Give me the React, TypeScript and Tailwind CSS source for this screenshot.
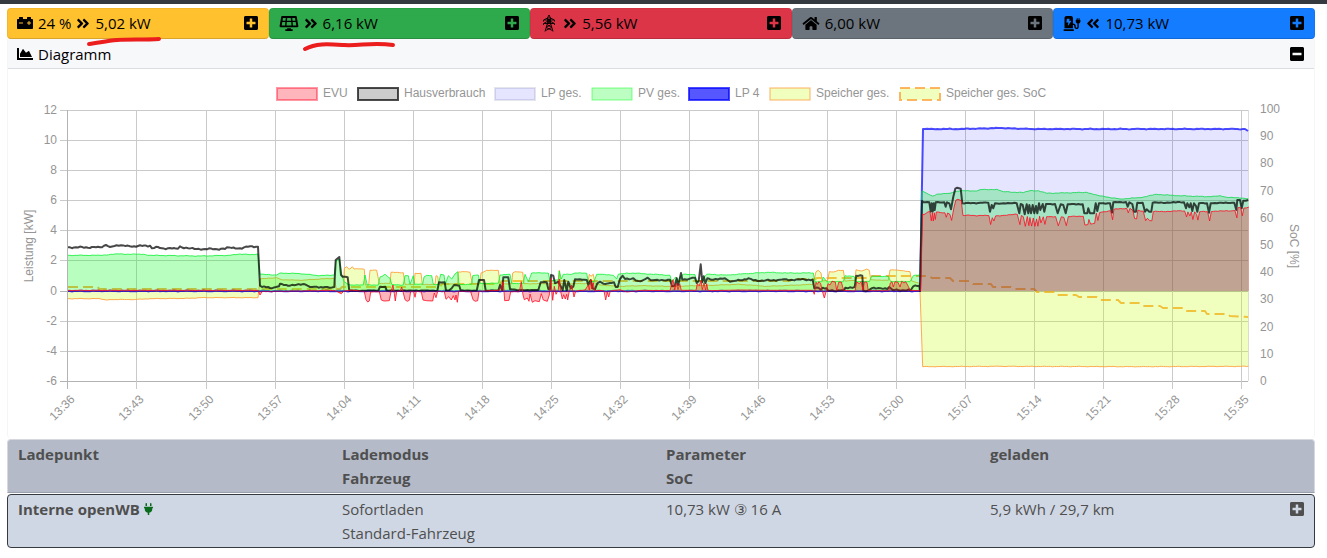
import React from "react";
import {
  FaAngleDoubleLeft,
  FaAngleDoubleRight,
  FaCarBattery,
  FaChargingStation,
  FaChartArea,
  FaHome,
  FaMinusSquare,
  FaPlug,
  FaPlusSquare,
  FaSolarPanel,
} from "react-icons/fa";

type Point = [number, number];

interface TileProps {
  label: string;
  color: string;
  icon: React.ReactNode;
  level?: string;
  direction?: "in" | "out";
  power: string;
  mark?: React.ReactNode;
}

interface LegendItem {
  x: number;
  label: string;
  fill: string;
  stroke: string;
  width: number;
  dash?: string;
}

const ZERO = 291;
const LEFT = 68;
const RIGHT = 1248;

// a block of samples: x from the block's start, height above zero, three ticks per unit
const block = (start: number, raw: string): Point[] => {
  const n = raw.trim().split(/[\s,]+/).map(Number);
  const out: Point[] = [];
  for (let i = 0; i < n.length; i += 2) {
    out.push([start + n[i] / 3, ZERO - n[i + 1] / 3]);
  }
  return out;
};

// fills wide gaps between samples with a small ripple
const ripple = (points: Point[], amount: number): Point[] => {
  const out: Point[] = [];
  points.forEach(([x, y], i) => {
    out.push([x, y]);
    const next = points[i + 1];
    if (!next) return;
    const steps = Math.floor((next[0] - x) / 2);
    for (let s = 1; s < steps; s++) {
      const px = x + ((next[0] - x) * s) / steps;
      const noise = Math.sin(px * 1.9) * Math.cos(px * 0.83) * amount;
      out.push([px, y + ((next[1] - y) * s) / steps + noise]);
    }
  });
  return out;
};

const at = (points: Point[], x: number) => {
  const i = points.findIndex((p) => p[0] >= x);
  if (i <= 0) return points[i === 0 ? 0 : points.length - 1][1];
  const [x0, y0] = points[i - 1];
  const [x1, y1] = points[i];
  return y0 + ((y1 - y0) * (x - x0)) / (x1 - x0);
};

const line = (points: Point[]) =>
  "M" + points.map(([x, y]) => `${x.toFixed(1)} ${y.toFixed(1)}`).join("L");

const area = (points: Point[]) =>
  `${line(points)}L${points[points.length - 1][0]} ${ZERO}L${points[0][0]} ${ZERO}Z`;

const houseLate = ripple(
  block(
    900,
    `60 0 66 270 70 266 88 266 92 238 95 263 98 238 101 263 104 243 107 266 133 266 137 253 141 266
    148 263 153 245 160 283 166 307 172 310 182 307 187 263 265 265 270 238 275 258 280 248 285 263
    350 263 358 233 362 261 368 258 374 230 380 260 385 233 388 258 393 233 398 258 403 233 408 255
    412 233 417 263 421 243 428 261 433 238 438 261 465 261 473 233 482 260 490 258 497 233 503 260
    548 260 553 233 562 233 565 248 570 233 582 233 587 263 592 240 597 263 630 263 636 235 640 266
    678 267 683 253 688 266 697 261 702 238 708 238 712 265 728 265 735 238 740 245 748 238 754 238
    758 265 852 266 858 248 862 263 868 251 872 263 877 240 882 263 888 255 892 238 897 263 921 263
    927 235 932 263 1003 265 1009 243 1012 273 1020 273 1025 248 1030 271 1045 273`
  ),
  0.5
);

const house: Point[] = [
  ...ripple(
    block(
      0,
      `204 131 300 131 318 138 330 132 363 137 390 134 450 136 456 128 474 132 486 128 534 127 540 134
      552 128 615 126 675 126 681 131 720 128 750 134 774 133 780 16 786 12 804 12 816 8 828 12 837 14
      840 22 870 16 915 20 930 12 975 12 1002 12`
    ),
    0.9
  ),
  ...ripple(
    block(
      320,
      `43 12 47 93 58 102 63 48 68 43 83 41 88 1 175 1 180 13 196 13 200 1 352 1 357 26 374 26 378 1
      388 2 395 8 402 18 418 16 422 1 470 1 477 33 492 33 497 1 535 1 540 18 547 3 550 41 565 41
      570 6 590 3 655 3 662 26 680 26 685 6 690 6 693 48 700 46 705 23 715 28 720 18 728 3 733 33
      740 1 745 28 752 8 760 13 765 35 800 33 805 18 812 33 818 8 825 5 832 23`
    ),
    0.3
  ),
  ...ripple(
    block(
      600,
      `0 28 10 22 30 24 42 26 47 12 53 12 60 36 68 46 75 36 100 38 115 30 128 32 143 40 152 32 210 34
      216 14 224 16 230 38 234 18 238 30 243 54 247 34 262 34 285 40 290 24 296 30 302 80 307 26
      311 44 316 24 322 38 340 34 375 38 390 28 420 32 445 38 480 30 540 34 638 34 643 8 655 10
      663 4 668 10 680 8 684 1 732 2 736 10 764 12 769 46 787 46 790 1 804 1 815 8 862 6 868 12
      878 3 932 2 940 14 958 16`
    ),
    0.9
  ),
  ...houseLate,
];

// distance between house load and grid import while the car is charging
const gridGap: Point[] = [
  [920, 0], [922, 13], [929, 9], [950, 11], [962, 12], [988, 13], [1017, 11], [1033, 13],
  [1083, 12], [1100, 9], [1112, 7], [1130, 6], [1145, 9], [1153, 9], [1233, 8], [1248, 7],
];

const grid: Point[] = [
  ...ripple(block(0, "204 2 600 2 774 2 780 -12 786 -2 1002 2"), 0.3),
  ...block(
    320,
    `55 -4 64 -8 72 0 96 3 133 -2 138 -26 143 -33 148 -30 152 -3 178 -2 184 -27 192 -30 208 -29
    213 -2 219 18 223 -8 226 -30 230 -1 240 -1 245 12 249 -2 255 -26 262 -31 268 -28 272 -1 281 -2
    285 -19 289 -1 304 -3 309 -27 320 -29 338 -30 343 -6 348 -20 353 -1 373 -2 378 -25 386 -17
    394 -27 400 -14 405 -27 408 -12 412 -34 416 -1 452 -2 459 -26 466 -31 473 -29 477 -1 536 2
    545 12 550 28 554 -29 567 -28 572 -2 598 -2 604 28 609 -12 613 -26 622 -21 627 -31 630 -9
    637 -34 645 -29 658 -32 664 -8 670 -27 682 -31 688 -12 692 38 698 -28 703 14 708 -10 715 3
    718 36 722 -2 727 -24 731 -11 736 -24 740 -10 743 -27 748 0 755 18 762 -18 767 0 795 3 805 18
    808 2 812 34 815 6 820 25 824 0`
  ),
  ...block(
    600,
    `0 2 12 0 17 -27 22 -4 26 -18 31 0 60 4 80 -3 125 2 210 1 215 20 219 34 224 3 229 24 234 4
    239 22 244 2 288 2 292 22 298 16 303 32 307 4 312 24 317 2 320 22 324 1 420 3 520 2 638 2
    643 -10 648 26 652 20 657 28 662 22 667 0 673 -21 678 -3 684 22 690 18 696 29 706 27 710 2
    716 26 724 27 731 2 765 0 770 27 778 22 783 28 789 3 793 27 801 26 805 1 866 1 871 24 876 28
    880 12 885 28 894 26 900 12 905 29 912 24 917 28 925 14 930 2 958 1`
  ),
  ...houseLate.map(([x, y]): Point => [x + 0.6, Math.min(ZERO, y + at(gridGap, x))]),
];

const solar = ripple(
  [
    ...block(
      0,
      `204 107 300 107 345 111 430 110 450 107 600 105 690 107 720 111 750 109 774 111 780 50 830 48
      840 54 900 52 960 46 1002 48`
    ),
    ...block(
      320,
      `43 50 48 90 58 96 65 50 72 28 90 18 130 18 135 48 142 18 175 18 180 42 195 50 210 38 215 20
      250 18 255 46 265 46 270 20 280 46 283 20 308 20 312 42 320 47 335 46 340 20 355 20 362 50
      372 48 376 20 385 46 395 36 405 51 413 58 417 20 455 20 458 46 475 48 480 23 535 23 540 48
      570 50 575 23 610 23 615 50 625 28 635 54 685 54 690 30 715 33 718 60 724 36 730 50 755 50
      765 54 800 53 805 28 822 28 830 50`
    ),
    ...block(
      600,
      `0 50 40 47 50 36 55 50 80 54 130 52 210 47 215 28 228 42 235 28 240 43 250 50 285 49 290 28
      305 32 320 50 380 48 440 52 500 56 560 54 640 54 645 28 665 28 670 42 680 28 730 28 735 46
      762 44 768 28 808 28 815 44 865 44 872 28 930 28 940 46 958 48`
    ),
    ...block(
      900,
      `60 48 66 300 80 293 98 285 110 290 150 293 165 298 190 301 230 300 240 304 290 305 310 298
      370 295 390 301 415 301 440 293 560 296 600 285 660 276 720 280 770 290 830 286 920 283
      960 286 980 281 1045 277`
    ),
  ],
  0.4
);

const battery = ripple(
  [
    ...block(
      0,
      `204 -23 300 -23 318 -27 360 -25 400 -26 450 -23 570 -22 600 -20 774 -20 780 36 830 40 845 34
      900 32 960 36 1002 38`
    ),
    ...block(
      320,
      `43 38 50 0 60 -6 70 0 73 68 80 73 86 66 90 66 97 73 102 66 130 66 133 65 136 18 146 18 150 62
      170 62 178 22 210 23 213 56 250 55 255 20 283 20 285 53 303 53 307 20 345 20 348 46 353 44
      356 20 413 22 415 57 440 58 450 56 457 22 480 24 483 54 500 62 535 62 540 22 575 22 578 54
      585 58 608 56 612 22 715 22 718 62 722 22 803 22 808 50 813 44 820 50 825 22`
    ),
    ...block(
      600,
      `0 18 60 14 120 16 210 14 300 16 420 20 500 14 640 20 648 58 655 62 663 54 667 30 683 32 688 58
      700 57 715 62 730 62 735 30 765 32 768 64 785 60 800 66 808 62 812 34 865 32 870 63 890 63
      930 58 935 30 958 24`
    ),
    ...block(900, "60 0 68 -227 300 -226 700 -227 1045 -226"),
  ],
  0.3
);

const stateOfCharge: Point[] = [
  [68, 287], [98, 287], [99, 289], [340, 289], [342, 287], [440, 287], [442, 284], [500, 284],
  [502, 281], [790, 281], [792, 279], [815, 279], [817, 278], [870, 278], [872, 276], [929, 276],
  [932, 278], [950, 278], [953, 281], [970, 281], [973, 284], [991, 284], [993, 287], [1011, 287],
  [1014, 289], [1034, 289], [1037, 292], [1055, 292], [1057, 295], [1076, 295], [1079, 297],
  [1097, 297], [1100, 300], [1118, 300], [1121, 303], [1140, 303], [1143, 306], [1160, 306],
  [1163, 308], [1183, 308], [1185, 311], [1205, 311], [1207, 314], [1228, 314], [1230, 316],
  [1248, 317],
];

const chargePoint = ripple(
  [[68, 291], [920, 291], [923, 129], [960, 129], [1000, 128], [1030, 129], [1245, 129], [1248, 131]],
  0.4
);

const legend: LegendItem[] = [
  { x: 277, label: "EVU", fill: "rgba(255,10,33,0.3)", stroke: "rgba(255,0,33,0.4)", width: 2 },
  { x: 358, label: "Hausverbrauch", fill: "rgba(0,0,0,0.2)", stroke: "rgba(0,0,0,0.7)", width: 2 },
  { x: 495, label: "LP ges.", fill: "rgba(0,0,255,0.1)", stroke: "rgba(0,0,80,0.1)", width: 2 },
  { x: 592, label: "PV ges.", fill: "rgba(10,255,33,0.27)", stroke: "rgba(10,255,33,0.5)", width: 1 },
  { x: 689, label: "LP 4", fill: "rgba(0,0,255,0.66)", stroke: "rgba(0,0,255,0.7)", width: 2 },
  { x: 770, label: "Speicher ges.", fill: "rgba(200,255,13,0.27)", stroke: "rgba(255,155,60,0.8)", width: 1 },
  { x: 900, label: "Speicher ges. SoC", fill: "rgba(200,255,13,0.27)", stroke: "rgba(255,150,40,0.7)", width: 2, dash: "10 5" },
];

const times = [
  "13:36", "13:43", "13:50", "13:57", "14:04", "14:11", "14:18", "14:25", "14:32",
  "14:39", "14:46", "14:53", "15:00", "15:07", "15:14", "15:21", "15:28", "15:35",
];

const PowerPole = () => (
  <svg
    className="h-[18px] w-3 shrink-0"
    viewBox="0 0 12 18"
    fill="none"
    stroke="currentColor"
    strokeWidth="0.9"
    aria-hidden="true"
  >
    <path d="M4.5 4 6 1l1.500 3M.5 6 4.500 4h3l4 2v1.500M.5 6v1.500M.5 9.500 4.200 7.500h3.600l3.700 2V11M.5 9.500V11M1 6h10M1 9.500h10" />
    <path d="M4.500 4v5L2 17.500M7.500 4v5L10 17.500M4.500 4.500l3 3-3 2M7.500 4.500l-3 3 3 2M4 10.500l4.800 3L2.600 16.500M8 10.500l-4.800 3 6.200 3" />
  </svg>
);

const Tile: React.FC<TileProps> = ({ label, color, icon, level, direction, power, mark }) => (
  <div
    className={`relative flex min-w-0 flex-1 items-center gap-[5px] rounded border border-black/5 border-b-black/15 px-[9px] pb-[3px] pt-0.5 leading-6 ${color}`}
  >
    {icon}
    {level && <span className="whitespace-nowrap">{level}</span>}
    {direction === "in" && <FaAngleDoubleRight className="w-[14px] shrink-0" />}
    {direction === "out" && <FaAngleDoubleLeft className="w-[14px] shrink-0" />}
    <span className="whitespace-nowrap">{power}</span>
    <button type="button" aria-label={`${label} einblenden`} className="ml-auto">
      <FaPlusSquare className="size-4" />
    </button>
    {mark}
  </div>
);

const Chart = () => (
  <svg
    className="block h-auto w-full"
    viewBox="8 69 1306 369"
    role="img"
    aria-label="Diagramm"
    fontFamily="'Liberation Sans', Arial, sans-serif"
    fontSize="12"
    fill="#959595"
  >
    {legend.map((item) => (
      <g key={item.label}>
        <rect
          x={item.x}
          y={88}
          width={40}
          height={12}
          fill={item.fill}
          stroke={item.stroke}
          strokeWidth={item.width}
          strokeDasharray={item.dash}
        />
        <text x={item.x + 46} y={97}>
          {item.label}
        </text>
      </g>
    ))}

    {Array.from({ length: 10 }).map((_, i) => (
      <g key={i}>
        <path
          d={`M60 ${Math.round(110 + i * 30.09) + 0.5}H${RIGHT}`}
          stroke={i === 6 || i === 9 ? "#b3b3b3" : "#cacaca"}
        />
        <text x={57} y={Math.round(114 + i * 30.09)} textAnchor="end">
          {12 - i * 2}
        </text>
      </g>
    ))}
    {times.map((time, i) => {
      const x = Math.round(67.4 + i * 69.06) + 0.5;
      return (
        <g key={time}>
          <path d={`M${x} 110V389`} stroke={i === 0 ? "#b3b3b3" : "#cacaca"} />
          <text transform={`translate(${x + 8} 400) rotate(-45)`} textAnchor="end">
            {time}
          </text>
        </g>
      );
    })}
    <path d={`M${RIGHT + 0.5} 110V381`} stroke="#dcdcdc" />
    {Array.from({ length: 11 }).map((_, i) => (
      <text key={i} x={1260} y={Math.round(113 + i * 27.2)}>
        {100 - i * 10}
      </text>
    ))}
    <text transform="translate(33 246) rotate(-90)" textAnchor="middle">
      Leistung [kW]
    </text>
    <text transform="translate(1290 246) rotate(90)" textAnchor="middle">
      SoC [%]
    </text>

    <g fill="none" strokeLinejoin="round">
      <path d={line(stateOfCharge)} stroke="rgba(255,145,20,0.75)" strokeWidth={2} strokeDasharray="10 5" />
      <path d={area(battery)} fill="rgba(200,255,13,0.27)" />
      <path d={line(battery)} stroke="rgba(255,155,50,0.85)" />
      <path d={line(chargePoint)} stroke="rgba(0,0,255,0.7)" strokeWidth={2} />
      <path d={area(solar)} fill="rgba(10,255,33,0.29)" />
      <path d={line(solar)} stroke="rgba(10,240,50,0.8)" />
      <path d={area(chargePoint)} fill="rgba(0,0,255,0.1)" />
      <path d={line(house)} stroke="rgba(0,0,0,0.72)" strokeWidth={2} />
      <path d={area(grid)} fill="rgba(255,10,33,0.3)" />
      <path d={line(grid)} stroke="rgba(255,10,33,0.8)" />
      <path d={`M${LEFT} ${ZERO + 0.5}H920`} stroke="rgba(60,0,150,0.5)" />
    </g>
  </svg>
);

const App: React.FC = () => {
  return (
    <div className="min-h-screen bg-white font-['Open_Sans','Noto_Sans',sans-serif] text-[15px] text-black">
      <div className="h-1 bg-[#343a40]" />
      <main className="pl-[7px] pr-3 pt-1">
        <section className="flex">
          <Tile
            label="Speicher"
            color="bg-[#ffc12e]"
            icon={<FaCarBattery className="size-4 shrink-0" />}
            level="24 %"
            direction="in"
            power="5,02 kW"
            mark={
              <svg className="absolute left-[76px] top-[26px] h-3 w-20" viewBox="0 0 80 12" fill="none" aria-hidden="true">
                <path d="M5 9C14 8 22 6 33 5S60 5 75 4" stroke="#eb1d1d" strokeWidth="4" strokeLinecap="round" />
              </svg>
            }
          />
          <Tile
            label="PV"
            color="bg-[#2ea94b]"
            icon={<FaSolarPanel className="w-5 shrink-0" />}
            direction="in"
            power="6,16 kW"
            mark={
              <svg className="absolute left-8 top-[30px] h-4 w-24" viewBox="0 0 96 16" fill="none" aria-hidden="true">
                <path d="M3 10C14 4 26 5 42 6S70 3 91 6" stroke="#eb1d1d" strokeWidth="4" strokeLinecap="round" />
              </svg>
            }
          />
          <Tile
            label="EVU"
            color="bg-[#dc3548]"
            icon={
              <span className="px-[3px]">
                <PowerPole />
              </span>
            }
            direction="in"
            power="5,56 kW"
          />
          <Tile
            label="Hausverbrauch"
            color="bg-[#6c757d]"
            icon={<FaHome className="w-[18px] shrink-0" />}
            power="6,00 kW"
          />
          <Tile
            label="Ladepunkte"
            color="bg-[#147cff]"
            icon={<FaChargingStation className="w-[18px] shrink-0" />}
            direction="out"
            power="10,73 kW"
          />
        </section>

        <section className="rounded-b border-x border-[#f5f5f5]">
          <header className="flex items-center gap-[5px] border-b border-[#dadde1] bg-[#f7f8fa] px-[9px] pb-0.5 pt-[3px] leading-6">
            <FaChartArea className="size-4" />
            <h2>Diagramm</h2>
            <button type="button" aria-label="Diagramm ausblenden" className="ml-auto">
              <FaMinusSquare className="size-4" />
            </button>
          </header>
          <Chart />
        </section>

        <table className="block text-left leading-6 text-[#4f4f4f]">
          <thead className="block">
            <tr className="mb-px mt-px grid grid-cols-4 rounded-t border border-[#d5d8de] border-b-[#9a9fae] bg-[#b4bac8] py-0.5 pl-[10px]">
              <th>Ladepunkt</th>
              <th>
                Lademodus
                <br />
                Fahrzeug
              </th>
              <th>
                Parameter
                <br />
                SoC
              </th>
              <th>geladen</th>
            </tr>
          </thead>
          <tbody className="block">
            <tr className="grid grid-cols-4 rounded border border-[#343a40] bg-[#cfd7e4] py-0.5 pl-[10px]">
              <th scope="row">
                <span className="flex items-center gap-1">
                  Interne openWB
                  <FaPlug className="h-3 w-[9px] text-[#0b6b1c]" />
                </span>
              </th>
              <td>
                Sofortladen
                <br />
                Standard-Fahrzeug
              </td>
              <td>10,73 kW ③ 16 A</td>
              <td>
                <span className="flex items-center justify-between pr-[9px]">
                  5,9 kWh / 29,7 km
                  <button type="button" aria-label="Ladepunkt einblenden">
                    <FaPlusSquare className="size-4" />
                  </button>
                </span>
              </td>
            </tr>
          </tbody>
        </table>
      </main>
    </div>
  );
};

export default App;
